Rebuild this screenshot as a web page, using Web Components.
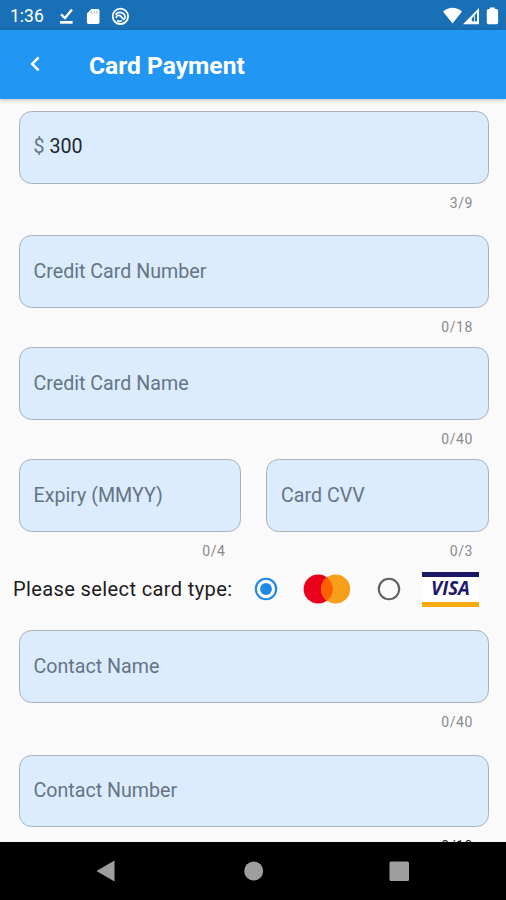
<!DOCTYPE html>
<html lang="en">
<head>
<meta charset="utf-8">
<title>Card Payment</title>
<style>
html, body { margin: 0; height: 100%; }
body { width: 506px; height: 900px; overflow: hidden; font-family: Roboto, "Liberation Sans", sans-serif; background: #fafafa; }
</style>
</head>
<body>
<payment-screen></payment-screen>
<script>
const define = (name, html) => customElements.define(name, class extends HTMLElement {
  constructor() {
    super();
    const t = document.createElement('template');
    t.innerHTML = html;
    this.attachShadow({ mode: 'open' }).append(t.content.cloneNode(true));
  }
});

define('status-bar', `
<style>
:host { display: flex; align-items: center; height: 30px; box-sizing: border-box; padding: 1px 7px 0 10px; background: #1a70b7; color: #fff; }
.time { font-size: 17.5px; line-height: 28px; padding-top: 1px; width: 47px; }
svg { display: block; flex: none; }
.right { margin-left: auto; display: flex; align-items: center; }
</style>
<span class="time">1:36</span>
<svg width="76" height="24" viewBox="57 3 76 24" fill="none">
  <path d="M61 13.3L65 17.1L72 8.5" stroke="#fff" stroke-width="2.3"/>
  <path d="M60 20h12.6v2.7H60z" fill="#fff"/>
  <path d="M91.5 8h6.3q1.7 0 1.7 1.7v11.6q0 1.7-1.7 1.7H88.6q-1.7 0-1.7-1.7V12.6z" fill="#fff"/>
  <path d="M91.4 10.3v2.2M94.3 10.3v2.2M97 10.3v2.2" stroke="#1a70b7" stroke-width=".8" opacity=".7"/>
  <circle cx="120.400" cy="15.300" r="7.700" stroke="#fff" stroke-width="1.800"/>
  <path d="M115.600 14c1.800-3.600 7-3.600 9.200.4 .6 1.200.5 2.500-.2 3.600M116 17c.6-2.800 3.600-3.400 5.200-1.400l3 3.400M117.200 19.300c1.400 1.300 3.300 1.300 4.600.2" stroke="#fff" stroke-width="1.700"/>
</svg>
<div class="right">
<svg width="57" height="24" viewBox="442 3 57 24">
  <path d="M443 10.500Q452.500 3 462 10.500L452.500 22.500z" fill="#fff"/>
  <path d="M479 7v16.200H463z" fill="#fff"/>
  <path d="M477 11.500v8.800h-5.200v-2.800z" fill="#1a70b7"/><path d="M474.500 14.500v5.800" stroke="#fff" stroke-width=".8"/>
  <path d="M489.800 6.500h5v1.600h1.600q1.700 0 1.700 1.600v11.800q0 1.700-1.700 1.700h-7.900q-1.700 0-1.700-1.700V9.700q0-1.600 1.700-1.600h1.300z" fill="#fff"/>
</svg></div>`);

define('app-bar', `
<style>
:host { display: flex; align-items: center; height: 69px; padding-left: 28px; background: #2196f3; color: #fff; box-shadow: 0 1px 4px rgba(0,0,0,.25); position: relative; z-index: 1; box-sizing: border-box; }
svg { display: block; margin: 0 47px 2px 0; }
h1 { margin: 0; font-size: 24.6px; font-weight: 700; line-height: 30px; padding-top: 2px; white-space: nowrap; }
</style>
<svg width="14" height="18" viewBox="0 0 14 18" fill="none"><path d="M10.600 2.500L4.200 8.900L10.600 15.300" stroke="#fff" stroke-width="2.500"/></svg>
<h1><slot></slot></h1>`);

define('text-field', `
<style>
:host { display: block; flex: 1; min-width: 0; }
.box { height: 72.5px; box-sizing: border-box; border: 1px solid #a9b2ba; border-radius: 12.5px; background: #dbecff; display: flex; align-items: center; gap: 5px; padding: 0 14px 1px; font-size: 19.65px; color: #667482; white-space: nowrap; }
.count { height: 39.5px; line-height: 38px; padding-right: 15.5px; text-align: right; font-size: 14px; letter-spacing: .6px; color: var(--count-color, #8a8a8a); }
::slotted([slot=value]) { color: #1b242e; }
</style>
<div class="box"><slot></slot><slot name="value"></slot></div>
<div class="count"><slot name="count"></slot></div>`);

define('field-row', `
<style>
:host { display: flex; gap: 25px; height: 112px; margin: 0 17.5px 0 18.5px; }
:host([spaced]) { height: 124.4px; }
</style><slot></slot>`);

define('radio-dot', `
<style>
:host { display: block; width: 24px; height: 24px; --c: #616161; }
:host([checked]) { --c: #1e88e5; }
circle { fill: none; stroke: var(--c); stroke-width: 2.1; }
.dot { display: none; fill: var(--c); stroke: none; }
:host([checked]) .dot { display: block; }
svg { display: block; }
</style>
<svg width="24" height="24" viewBox="0 0 24 24"><circle cx="12" cy="12" r="10.200"/><circle class="dot" cx="12" cy="12" r="5.900"/></svg>`);

define('mastercard-logo', `
<style>:host, svg { display: block; }</style>
<svg width="48" height="30" viewBox="0 0 48 30"><circle cx="15.200" cy="15" r="14.600" fill="#eb001b"/><circle cx="32.600" cy="15" r="14.600" fill="#f79e1b"/><path d="M23.900 3.300a14.600 14.600 0 0 1 0 23.400a14.600 14.600 0 0 1 0-23.400z" fill="#ff5f00"/></svg>`);

define('visa-logo', `
<style>
:host { display: flex; width: 57px; height: 35px; box-sizing: border-box; border-top: 5.5px solid #1a1864; border-bottom: 5px solid #f7a90f; background: #fff; align-items: center; justify-content: center; }
span { font: italic 700 18.8px/22px "Open Sans", sans-serif; color: #211b6b; padding-bottom: 2px; }
</style><span>VISA</span>`);

define('card-type', `
<style>
:host { display: flex; align-items: center; height: 36px; padding-left: 13px; font-size: 20.1px; color: #1c1c1c; }
.label { width: 241px; white-space: nowrap; letter-spacing: .35px; }
mastercard-logo { margin: 0 26px 0 25px; }
radio-dot { flex: none; }
visa-logo { margin-left: 21px; }
</style>
<span class="label"><slot></slot></span><radio-dot checked></radio-dot><mastercard-logo></mastercard-logo><radio-dot></radio-dot><visa-logo></visa-logo>`);

define('nav-bar', `
<style>:host { display: block; height: 58.5px; background: #000; position: relative; z-index: 1; } svg { display: block; }</style>
<svg width="506" height="58" viewBox="0 842 506 58" fill="#9e9e9e"><path d="M96.500 871L114.500 860.500V881.500z"/><circle cx="253.700" cy="871" r="9.500"/><rect x="389.500" y="861.500" width="19.500" height="19.500" rx="1.500"/></svg>`);

define('payment-screen', `
<style>
:host { display: flex; flex-direction: column; width: 506px; height: 900px; background: #fafafa; }
status-bar, app-bar, nav-bar { flex: none; }
main { flex: 1; min-height: 0; overflow: hidden; padding-top: 12px; box-sizing: border-box; }
card-type { margin: -.4px 0 23.4px; }
.last { --count-color: #222; }
</style>
<status-bar></status-bar>
<app-bar>Card Payment</app-bar>
<main>
<field-row spaced><text-field>$<span slot="value">300</span><span slot="count">3/9</span></text-field></field-row>
<field-row><text-field>Credit Card Number<span slot="count">0/18</span></text-field></field-row>
<field-row><text-field>Credit Card Name<span slot="count">0/40</span></text-field></field-row>
<field-row><text-field>Expiry (MMYY)<span slot="count">0/4</span></text-field><text-field>Card CVV<span slot="count">0/3</span></text-field></field-row>
<card-type>Please select card type:</card-type>
<field-row spaced><text-field>Contact Name<span slot="count">0/40</span></text-field></field-row>
<field-row class="last"><text-field>Contact Number<span slot="count">0/10</span></text-field></field-row>
</main>
<nav-bar></nav-bar>`);
</script>
</body>
</html>
